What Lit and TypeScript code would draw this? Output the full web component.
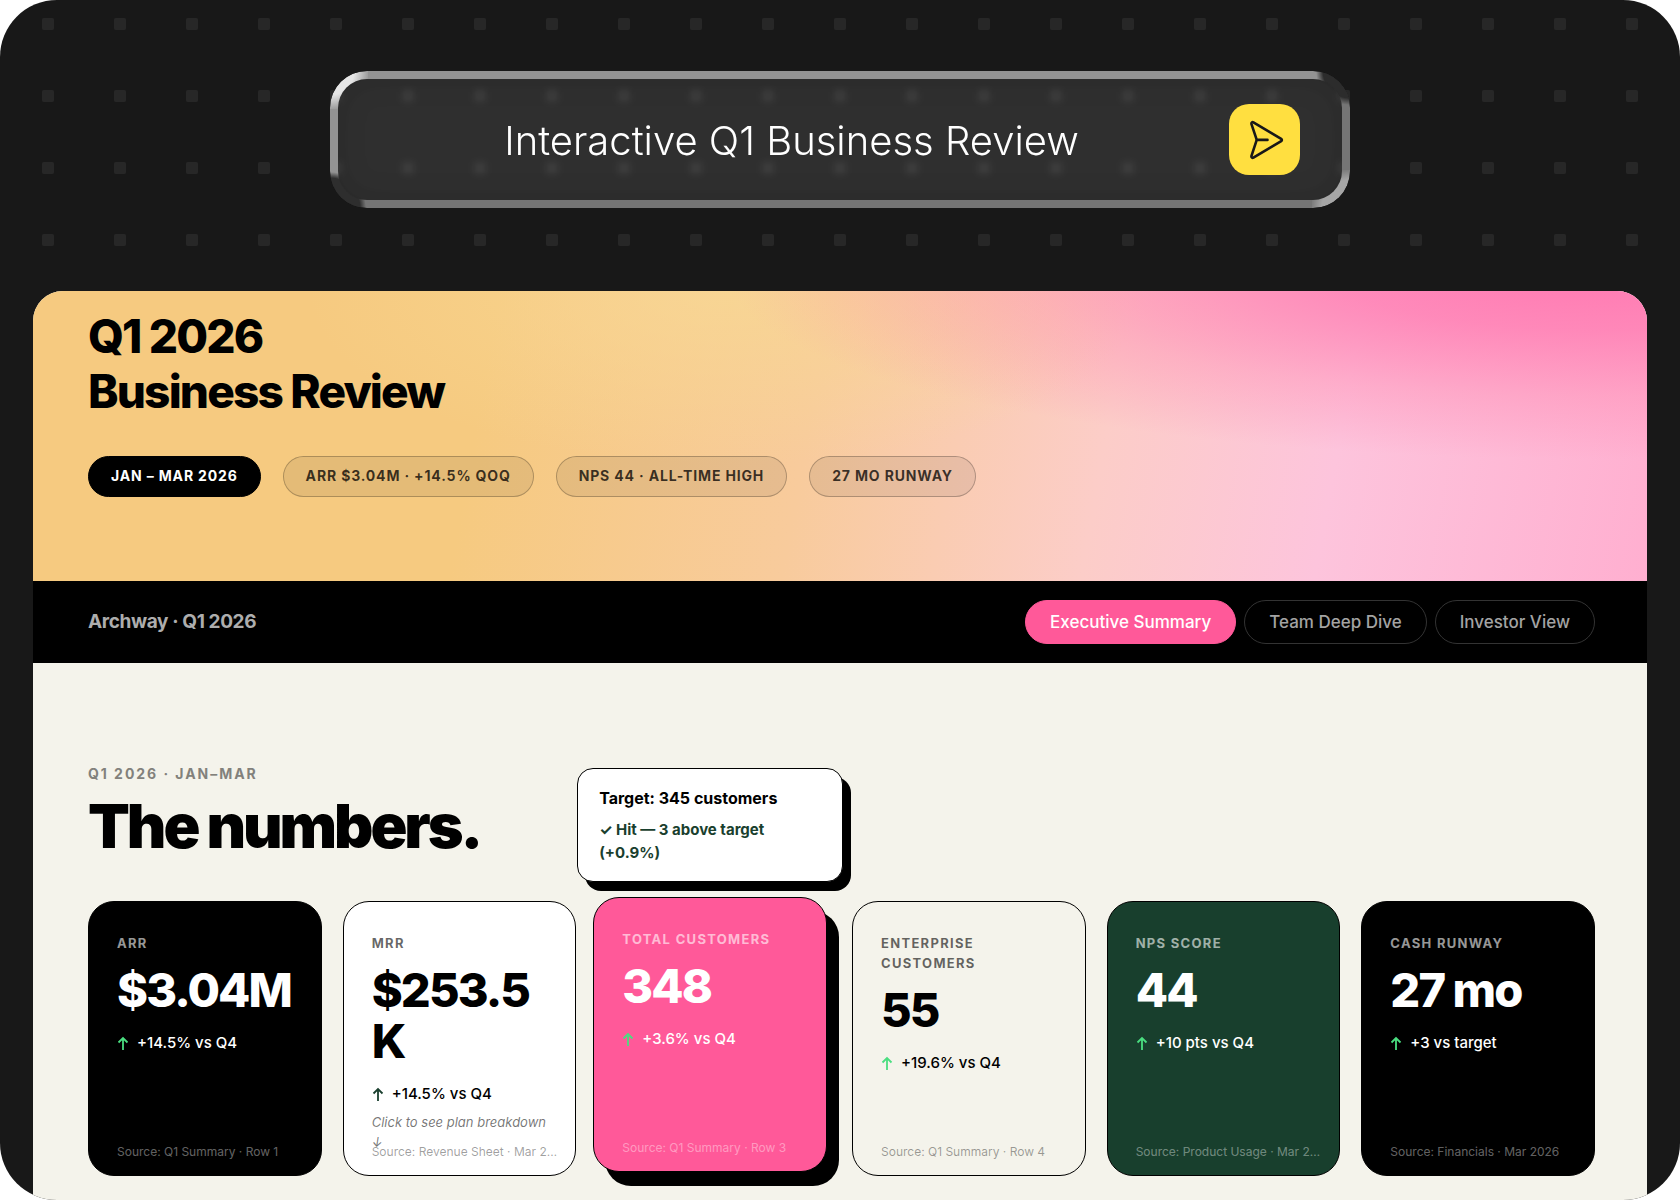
import { LitElement, html, svg, css, nothing } from "lit";
import { customElement, state } from "lit/decorators.js";
import { classMap } from "lit/directives/class-map.js";

interface Metric {
  label: string;
  value: string;
  unit?: string;
  delta: string;
  source: string;
  tone: string;
  hint?: string;
  target?: { title: string; result: string };
}

const METRICS: Metric[] = [
  { label: "ARR", value: "$3.04M", delta: "+14.5% vs Q4", source: "Source: Q1 Summary · Row 1", tone: "black" },
  {
    label: "MRR", value: "$253.5", unit: "K", delta: "+14.5% vs Q4",
    source: "Source: Revenue Sheet · Mar 2026", tone: "white", hint: "Click to see plan breakdown ↓",
  },
  {
    label: "Total customers", value: "348", delta: "+3.6% vs Q4", source: "Source: Q1 Summary · Row 3", tone: "pink",
    target: { title: "Target: 345 customers", result: "✓ Hit — 3 above target (+0.9%)" },
  },
  { label: "Enterprise customers", value: "55", delta: "+19.6% vs Q4", source: "Source: Q1 Summary · Row 4", tone: "cream" },
  { label: "NPS score", value: "44", delta: "+10 pts vs Q4", source: "Source: Product Usage · Mar 2026", tone: "green" },
  { label: "Cash runway", value: "27 mo", delta: "+3 vs target", source: "Source: Financials · Mar 2026", tone: "black" },
];

const TABS = ["Executive Summary", "Team Deep Dive", "Investor View"];
const FACTS = ["Jan – Mar 2026", "ARR $3.04M · +14.5% QoQ", "NPS 44 · All-time high", "27 mo runway"];

const arrowUp = svg`<path d="M6 14V2M1.5 6.5 6 2l4.5 4.5" fill="none" stroke="currentColor" stroke-width="1.8" stroke-linejoin="miter"/>`;

@customElement("metric-card")
export class MetricCard extends LitElement {
  static properties = { metric: { attribute: false } };
  declare metric: Metric;

  static styles = css`
    :host { display: block; position: relative; min-width: 0; }
    .card {
      position: relative; box-sizing: border-box; height: 100%; min-height: 275px;
      padding: 31px 28px 21px; border: 1px solid #000; border-radius: 26px;
      --soft: rgba(0, 0, 0, 0.6); --faint: rgba(0, 0, 0, 0.38); --up: #4ade80;
      color: #000;
    }
    .black { background: #000; color: #fff; --soft: rgba(255, 255, 255, 0.6); --faint: rgba(255, 255, 255, 0.4); }
    .white { background: #fff; --up: #1a3f2e; }
    .cream { background: #f4f3eb; }
    .green { background: #183f2d; color: #fff; --soft: rgba(255, 255, 255, 0.6); --faint: rgba(255, 255, 255, 0.4); }
    .pink {
      background: #ff5999; color: #fff; --soft: rgba(255, 255, 255, 0.6); --faint: rgba(255, 255, 255, 0.4);
      box-shadow: 12px 14px 0 #000; transform: translate(-4px, -4px);
    }
    .label {
      margin: 0; font-size: 13px; line-height: 20px; font-weight: 700;
      letter-spacing: 0.1em; text-transform: uppercase; color: var(--soft);
    }
    .value {
      margin: 11px 0 0; font-size: 47px; line-height: 51px; font-weight: 800;
      letter-spacing: -0.04em;
    }
    .delta {
      display: flex; align-items: center; gap: 8px; margin: 17px 0 0;
      font-size: 15px; line-height: 22px; font-weight: 500;
    }
    .arrow { width: 12px; height: 15px; flex: none; color: var(--up); }
    .hint {
      display: block; margin: 7px 0 0; padding: 0; border: 0; background: none; text-align: left;
      font: italic 400 13px/20px Inter, sans-serif; color: rgba(0, 0, 0, 0.55); cursor: pointer;
    }
    .source {
      position: absolute; left: 28px; right: 14px; bottom: 15px; margin: 0;
      font-size: 12px; line-height: 16px; color: var(--faint);
      white-space: nowrap; overflow: hidden; text-overflow: ellipsis;
    }
    .tip {
      position: absolute; left: 50%; bottom: calc(100% + 16px); width: 266px; box-sizing: border-box;
      transform: translateX(-50%); padding: 17px 21px; border: 1px solid #000; border-radius: 16px;
      background: #fff; box-shadow: 8px 9px 0 #000; color: #000;
      font-size: 16px; line-height: 24px; font-weight: 700;
    }
    .tip p { margin: 0; }
    .tip .result { margin-top: 8px; font-size: 15px; line-height: 23px; color: #1a3f2e; }
  `;

  render() {
    const m = this.metric;
    return html`<article class=${classMap({ card: true, [m.tone]: true })}>
      <h3 class="label">${m.label}</h3>
      <p class="value">${m.value}${m.unit ? html`<wbr>${m.unit}` : nothing}</p>
      <p class="delta"><svg class="arrow" viewBox="0 0 12 15" aria-hidden="true">${arrowUp}</svg>${m.delta}</p>
      ${m.hint ? html`<button class="hint" type="button">${m.hint}</button>` : nothing}
      <p class="source">${m.source}</p>
      ${m.target
        ? html`<div class="tip" role="tooltip"><p>${m.target.title}</p><p class="result">${m.target.result}</p></div>`
        : nothing}
    </article>`;
  }
}

@customElement("app-root")
export class AppRoot extends LitElement {
  @state() private tab = 0;

  static styles = css`
    :host { display: block; background: #fff; font-family: Inter, "Liberation Sans", sans-serif; color: #000; }
    .stage {
      position: relative; overflow: hidden; padding: 71px 33px 0;
      background: #181818; border-radius: 57px;
    }
    .dots { position: absolute; inset: 0; width: 100%; height: 100%; }

    .prompt {
      position: relative; display: flex; align-items: center; box-sizing: border-box;
      max-width: 1020px; margin: 0 auto; padding: 33px 50px 33px 24px; border-radius: 37px;
      background: rgba(255, 255, 255, 0.1); backdrop-filter: blur(3px);
      box-shadow: inset 0 0 36px rgba(0, 0, 0, 0.2);
    }
    .prompt::before {
      content: ""; position: absolute; inset: 0; padding: 8px; border-radius: inherit; pointer-events: none;
      background:
        radial-gradient(circle at 0 0, #e6e6e6 24px, #939393 40px) 0 0 / 38px 38px no-repeat,
        radial-gradient(circle at 100% 0, #2c2c2c 27px, rgba(44, 44, 44, 0) 34px) 100% 0 / 38px 38px no-repeat,
        radial-gradient(circle at 0 100%, #2e2e2e 30px, rgba(46, 46, 46, 0) 36px) 0 100% / 38px 38px no-repeat,
        radial-gradient(circle at 100% 100%, #a6a6a6 28px, #757575 40px) 100% 100% / 38px 38px no-repeat,
        linear-gradient(#939393 0 0) 0 0 / 100% 12px no-repeat,
        linear-gradient(#757575 0 0) 0 100% / 100% 12px no-repeat,
        linear-gradient(#939393 0 0) 0 0 / 12px 100% no-repeat,
        linear-gradient(#757575 0 0) 100% 0 / 12px 100% no-repeat;
      mask: linear-gradient(#000 0 0) content-box, linear-gradient(#000 0 0);
      mask-composite: exclude;
    }
    .query {
      flex: 1; min-width: 0; padding: 2px 0 0; border: 0; outline: 0; background: none; color: #fff;
      font: 350 40px/56px Inter, sans-serif; text-align: center;
    }
    .send {
      display: grid; place-items: center; width: 71px; height: 71px; padding: 0; border: 0;
      border-radius: 20px; background: #ffdf40; color: #181818; cursor: pointer;
    }
    .send svg { width: 42px; height: 42px; }

    .report {
      position: relative; margin-top: 83px; border-radius: 30px 30px 0 0; overflow: hidden; background: #f4f3eb;
    }
    .hero {
      padding: 18px 55px 84px;
      background:
        radial-gradient(ellipse 54% 64% at 97% -6%, #ff7ab2 0%, rgba(255, 124, 178, 0.8) 30%, rgba(255, 140, 180, 0.42) 66%, rgba(255, 160, 190, 0) 100%),
        radial-gradient(ellipse 26% 60% at 43% 0%, rgba(248, 216, 148, 0.8), rgba(248, 214, 148, 0)),
        linear-gradient(100deg, #f6ca80 0%, #f6ca80 28%, #f8cb9c 48%, #fccdc8 66%, #fdc4dc 80%, #ffafd0 100%);
    }
    .title { margin: 0; font-size: 46px; line-height: 55px; font-weight: 800; letter-spacing: -0.04em; }
    .title span { display: block; }
    .facts { display: flex; flex-wrap: wrap; gap: 22px; margin: 37px 0 0; padding: 0; list-style: none; }
    .fact {
      box-sizing: border-box; padding: 9px 22px 10px; border: 1px solid rgba(0, 0, 0, 0.25); border-radius: 21px;
      background: rgba(0, 0, 0, 0.07); color: rgba(0, 0, 0, 0.75);
      font-size: 14px; line-height: 20px; font-weight: 700; letter-spacing: 0.06em; text-transform: uppercase;
    }
    .fact:first-child { background: #000; border-color: #000; color: #fff; }

    .bar {
      display: flex; align-items: center; justify-content: space-between;
      padding: 19px 52px 19px 55px; background: #000;
    }
    .brand { font-size: 19px; line-height: 24px; font-weight: 700; letter-spacing: -0.02em; color: #adadad; }
    .tabs { display: flex; gap: 8px; }
    .tab {
      padding: 9px 24px; border: 1px solid #333; border-radius: 22px; background: none; color: #a3a3a3;
      font: 500 17px/24px Inter, sans-serif; cursor: pointer;
    }
    .tab.on { background: #ff5999; border-color: #ff5999; color: #fff; }

    .numbers { padding: 101px 52px 24px 55px; }
    .eyebrow {
      margin: 0; font-size: 14px; line-height: 20px; font-weight: 700; letter-spacing: 0.14em;
      text-transform: uppercase; color: #82817c;
    }
    .headline { margin: 10px 0 43px; font-size: 61px; line-height: 64px; font-weight: 900; letter-spacing: -0.05em; }
    .grid { display: grid; grid-template-columns: repeat(6, minmax(0, 1fr)); gap: 21px; }
  `;

  render() {
    return html`<main class="stage">
      <svg class="dots" aria-hidden="true">
        <defs>
          <pattern id="dot" width="72" height="72" patternUnits="userSpaceOnUse">
            <rect x="42" y="18" width="12" height="12" rx="2" fill="#272727" />
          </pattern>
        </defs>
        <rect width="100%" height="100%" fill="url(#dot)" />
      </svg>

      <form class="prompt" @submit=${(e: Event) => e.preventDefault()}>
        <input class="query" type="text" aria-label="Prompt" .value=${"Interactive Q1 Business Review"} />
        <button class="send" type="submit" aria-label="Send">
          <svg viewBox="0 0 42 42" fill="none" stroke="currentColor" stroke-width="2.6" stroke-linecap="round" stroke-linejoin="round" aria-hidden="true">
            <path d="M7.4 4.9 12.4 19.8a3 3 0 0 1 0 2L7.4 37.1a1.4 1.4 0 0 0 2 1.6L37.2 22.2a1.4 1.4 0 0 0 0-2.4L9.4 3.3a1.4 1.4 0 0 0-2 1.6ZM12.6 20.9H23.5" />
          </svg>
        </button>
      </form>

      <section class="report">
        <header class="hero">
          <h1 class="title"><span>Q1 2026</span><span>Business Review</span></h1>
          <ul class="facts">${FACTS.map((f) => html`<li class="fact">${f}</li>`)}</ul>
        </header>
        <nav class="bar">
          <span class="brand">Archway · Q1 2026</span>
          <div class="tabs">
            ${TABS.map((t, i) => html`<button type="button" class=${classMap({ tab: true, on: i === this.tab })}
              aria-pressed=${i === this.tab} @click=${() => (this.tab = i)}>${t}</button>`)}
          </div>
        </nav>
        <div class="numbers">
          <p class="eyebrow">Q1 2026 · Jan–Mar</p>
          <h2 class="headline">The numbers.</h2>
          <div class="grid">${METRICS.map((m) => html`<metric-card .metric=${m}></metric-card>`)}</div>
        </div>
      </section>
    </main>`;
  }
}
